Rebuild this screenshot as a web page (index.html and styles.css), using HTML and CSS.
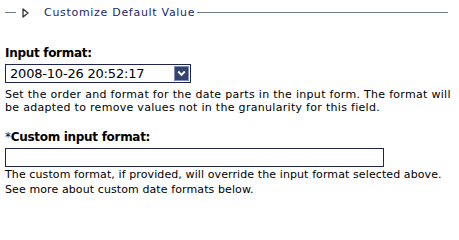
FILE: index.html
```html
<!DOCTYPE html>
<html>
<head>
<meta charset="utf-8">
<link rel="stylesheet" href="styles.css">
</head>
<body>
<div class="page">
  <div class="header">
    <span class="rule rule-left"></span>
    <svg class="tri" width="7" height="10" viewBox="0 0 7 10"><path d="M1 1 L6 5 L1 9 Z" fill="none" stroke="#333" stroke-width="1.3" stroke-linejoin="round"/></svg>
    <span class="header-text">Customize Default Value</span>
    <span class="rule rule-right"></span>
  </div>
  <div class="item">
    <div class="label">Input format:</div>
    <div class="select">
      <span class="select-value">2008-10-26 20:52:17</span>
      <span class="select-btn"><svg width="9" height="7" viewBox="0 0 9 7"><path d="M1.2 1.5 L4.5 4.8 L7.8 1.5" fill="none" stroke="#fff" stroke-width="1.9"/></svg></span>
    </div>
    <div class="desc desc-first">Set the order and format for the date parts in the input form. The format will be adapted to remove values not in the granularity for this field.</div>
  </div>
  <div class="item item-second">
    <div class="label"><span class="req">*</span>Custom input format:</div>
    <div class="textbox"></div>
    <div class="desc desc-second">The custom format, if provided, will override the input format selected above. See more about custom date formats below.</div>
  </div>
</div>
</body>
</html>
```
FILE: styles.css
```css
html, body { margin: 0; padding: 0; background: #fff; }
body { font-family: "DejaVu Sans", Verdana, sans-serif; color: #000; }
.page { padding: 6px 0 0 5px; width: 452px; }
.header {
  display: flex;
  align-items: center;
  height: 14px;
  width: 443px;
}
.rule { height: 1px; background: #6c7f8c; margin-top: -1px; }
.rule-left { width: 11px; flex: none; }
.rule-right { flex: 1; margin-left: 2px; }
.tri { flex: none; margin-left: 6px; margin-right: 15px; }
.header-text {
  color: #1c2868;
  font-size: 11px;
  letter-spacing: 0.7px;
  line-height: 14px;
  white-space: nowrap;
}
.item { padding-top: 26px; }
.item-second { padding-top: 16px; }
.label {
  font-weight: bold;
  font-size: 12px;
  line-height: 15px;
  letter-spacing: -0.3px;
}
.req { font-weight: normal; }
.select {
  margin-top: 3px;
  width: 186px;
  height: 19px;
  box-sizing: border-box;
  border: 1px solid #1d2550;
  display: flex;
  align-items: center;
  justify-content: space-between;
}
.select-value {
  font-size: 13px;
  letter-spacing: -0.2px;
  padding-left: 4px;
  line-height: 15px;
}
.select-btn {
  width: 15px; height: 15px;
  margin-right: 1px;
  background: #34426f;
  border: 1px solid #8190b8;
  box-sizing: border-box;
  display: flex; align-items: center; justify-content: center;
}
.desc { font-size: 11px; letter-spacing: 0.3px; }
.desc-first { margin-top: 5px; line-height: 13px; }
.desc-second { margin-top: 0; line-height: 15px; letter-spacing: 0.1px; }
.textbox {
  margin-top: 3px;
  width: 379px;
  height: 19px;
  box-sizing: border-box;
  border: 1px solid #1d2550;
}
```
